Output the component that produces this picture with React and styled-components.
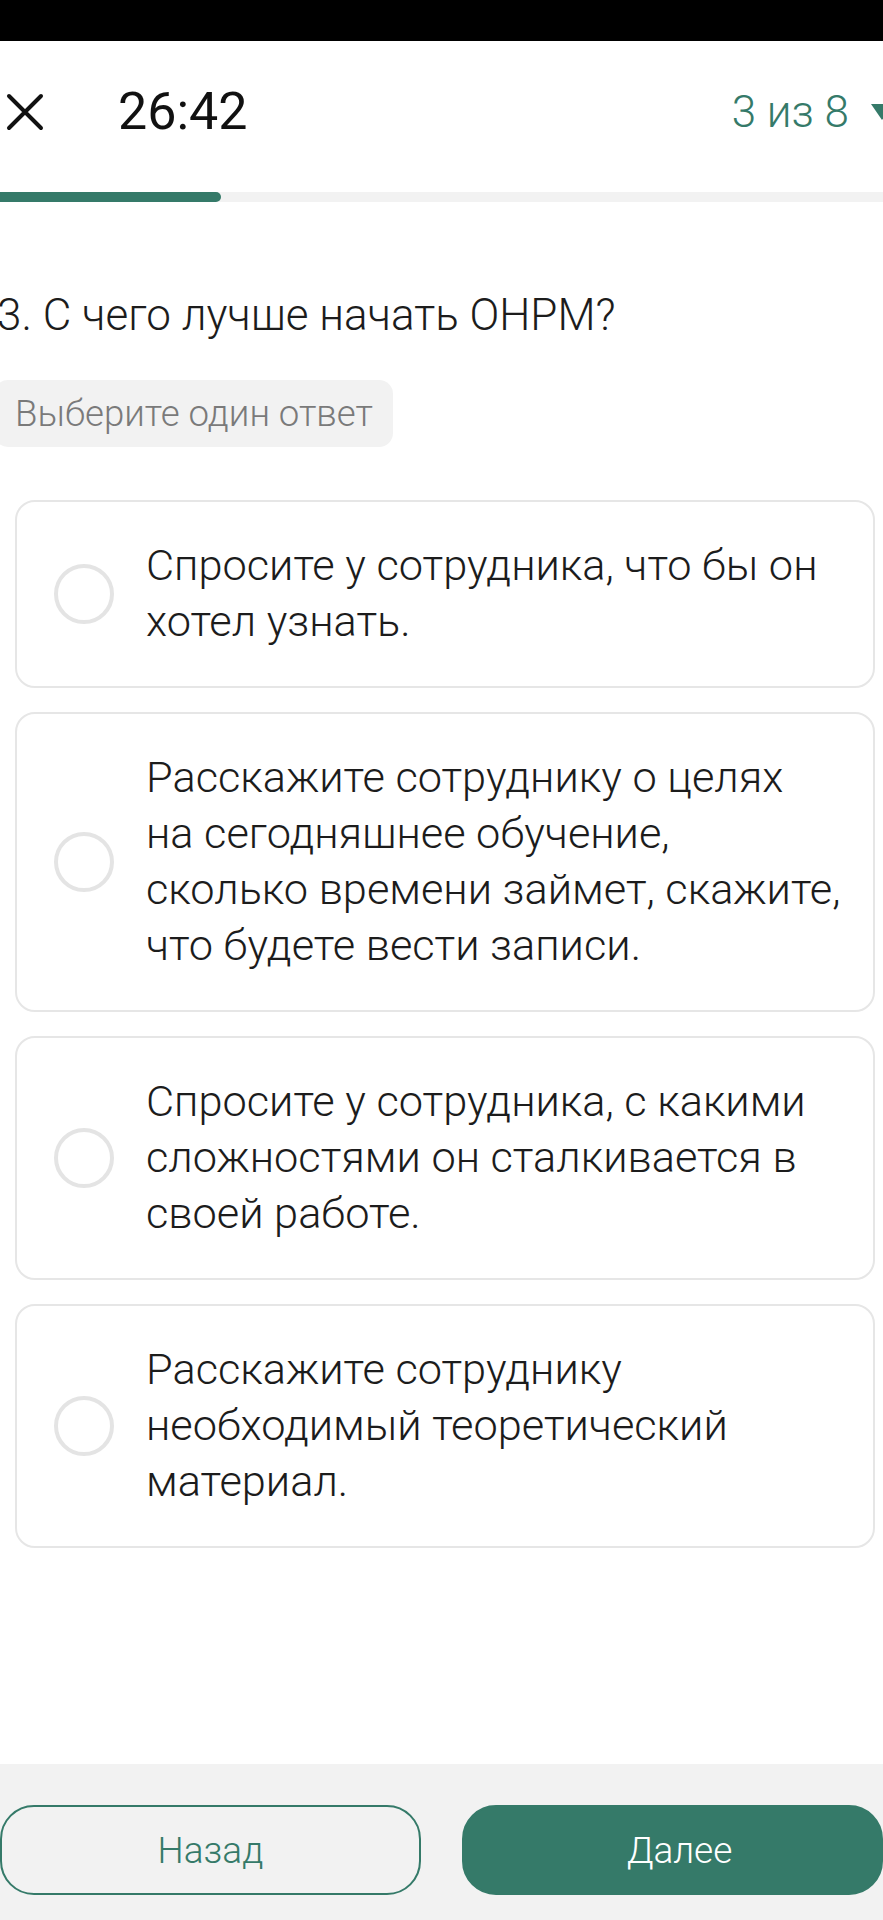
import React from 'react';
import styled, { createGlobalStyle } from 'styled-components';

const GREEN = '#357a69';

const GlobalStyle = createGlobalStyle`
  html, body {
    margin: 0;
    padding: 0;
    background: #fff;
    overflow: hidden;
  }
  body {
    font-family: Roboto, "Noto Sans", sans-serif;
    font-weight: 300;
    color: #1c1c1c;
  }
`;

const answers = [
  ['Спросите у сотрудника, что бы он', 'хотел узнать.'],
  [
    'Расскажите сотруднику о целях',
    'на сегодняшнее обучение,',
    'сколько времени займет, скажите,',
    'что будете вести записи.',
  ],
  ['Спросите у сотрудника, с какими', 'сложностями он сталкивается в', 'своей работе.'],
  ['Расскажите сотруднику', 'необходимый теоретический', 'материал.'],
];

const current = 3;
const total = 8;

const App = () => {
  return (
    <Page>
      <GlobalStyle />
      <StatusBar />
      <Header>
        <CloseButton>
          <svg width="38" height="38" viewBox="0 0 38 38">
            <path d="M3 3 L35 35 M35 3 L3 35" stroke="#111" strokeWidth="4" strokeLinecap="round" />
          </svg>
        </CloseButton>
        <Timer>26:42</Timer>
        <Counter>
          {current} из {total}
          <svg width="22" height="16" viewBox="0 0 22 16">
            <path d="M0 0 H22 L11 16 Z" fill={GREEN} />
          </svg>
        </Counter>
      </Header>
      <Track>
        <Fill style={{ width: `${((current - 1) / total) * 100}%` }} />
      </Track>
      <Content>
        <Question>{current}. С чего лучше начать ОНРМ?</Question>
        <Hint>Выберите один ответ</Hint>
        <Options>
          {answers.map((lines, i) => (
            <Option key={i}>
              <Radio />
              <AnswerText>
                {lines.map((line, j) => (
                  <React.Fragment key={j}>
                    {j > 0 && <br />}
                    {line}
                  </React.Fragment>
                ))}
              </AnswerText>
            </Option>
          ))}
        </Options>
      </Content>
      <Footer>
        <Button>Назад</Button>
        <Button $primary>Далее</Button>
      </Footer>
    </Page>
  );
};

const Page = styled.div`
  display: flex;
  flex-direction: column;
  min-height: 100vh;
`;

const StatusBar = styled.div`
  height: 41px;
  background: #000;
`;

const Header = styled.div`
  height: 142px;
  display: flex;
  align-items: center;
  padding-left: 6px;
`;

const CloseButton = styled.div`
  width: 38px;
  height: 38px;
  display: flex;
`;

const Timer = styled.div`
  margin-left: 74px;
  font-size: 52px;
  font-weight: 400;
  line-height: 1;
  color: #111;
`;

const Counter = styled.div`
  margin-left: auto;
  margin-right: -10px;
  display: flex;
  align-items: center;
  gap: 22px;
  font-size: 44px;
  line-height: 1;
  color: ${GREEN};
`;

const Track = styled.div`
  margin-top: 9px;
  height: 10px;
  background: #f2f2f2;
`;

const Fill = styled.div`
  height: 100%;
  background: ${GREEN};
  border-radius: 0 5px 5px 0;
`;

const Content = styled.div`
  display: flex;
  flex-direction: column;
`;

const Question = styled.h1`
  margin: 85px 0 0 -3px;
  font-size: 44px;
  line-height: 56px;
  font-weight: 300;
  color: #1c1c1c;
  white-space: nowrap;
`;

const Hint = styled.div`
  align-self: flex-start;
  margin: 37px 0 0 -6px;
  height: 67px;
  display: flex;
  align-items: center;
  padding: 0 20px 0 21px;
  background: #f2f2f2;
  border-radius: 14px;
  font-size: 36.6px;
  color: #7a7a7a;
`;

const Options = styled.div`
  display: flex;
  flex-direction: column;
  gap: 24px;
  margin: 53px 8px 0 15px;
`;

const Option = styled.div`
  display: flex;
  align-items: center;
  padding: 36px 0;
  border: 2px solid #e6e6e6;
  border-radius: 20px;
  background: #fff;
`;

const Radio = styled.div`
  flex-shrink: 0;
  width: 60px;
  height: 60px;
  box-sizing: border-box;
  margin: 0 32px 0 37px;
  border: 4px solid #e4e4e4;
  border-radius: 50%;
`;

const AnswerText = styled.div`
  font-size: 43.3px;
  line-height: 56px;
  white-space: nowrap;
  color: #1c1c1c;
`;

const Footer = styled.div`
  margin-top: auto;
  height: 156px;
  box-sizing: border-box;
  padding-top: 41px;
  display: flex;
  gap: 41px;
  background: #f2f2f2;
`;

const Button = styled.div`
  flex: 1 1 0;
  height: 90px;
  box-sizing: border-box;
  display: flex;
  align-items: center;
  justify-content: center;
  text-indent: ${(p) => (p.$primary ? '14px' : '0')};
  border-radius: 34px;
  font-size: 37px;
  border: 2px solid ${GREEN};
  background: ${(p) => (p.$primary ? GREEN : 'transparent')};
  color: ${(p) => (p.$primary ? '#fff' : GREEN)};
`;

export default App;
